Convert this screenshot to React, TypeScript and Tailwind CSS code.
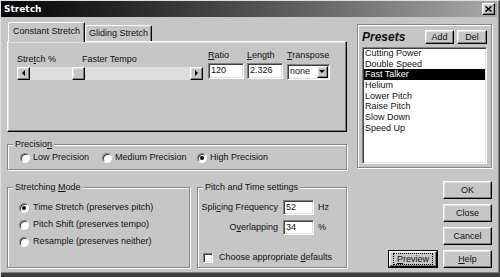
import React from 'react';

/*
    Classic Win9x "Stretch" dialog
*/
const raised = "border border-t-white border-l-white border-r-black border-b-black shadow-[inset_-1px_-1px_0_#808080,inset_1px_1px_0_#dfdfdf]";
const sunken = "border border-t-[#808080] border-l-[#808080] border-r-white border-b-white shadow-[inset_1px_1px_0_#404040,inset_-1px_-1px_0_#dfdfdf]";
const etched = "border border-[#868686] shadow-[inset_1px_1px_0_#fff,1px_1px_0_#fff]";

const presets = ["Cutting Power", "Double Speed", "Fast Talker", "Helium", "Lower Pitch", "Raise Pitch", "Slow Down", "Speed Up"];

function Radio({ checked }: { checked?: boolean }) {
    return (
        <span className="w-[10px] h-[10px] shrink-0 rounded-full bg-white border border-t-[#808080] border-l-[#808080] border-r-white border-b-white shadow-[inset_1px_1px_0_#404040] flex items-center justify-center">
            {checked && <span className="w-[4px] h-[4px] rounded-full bg-black" />}
        </span>
    );
}

function Group({ title, className, children }: { title: React.ReactNode; className: string; children?: React.ReactNode }) {
    return (
        <div className={`relative ${etched} ${className}`}>
            <span className="absolute -top-[6px] left-[5px] px-[2px] bg-[#c6c6c6] leading-[10px]">{title}</span>
            {children}
        </div>
    );
}

function Btn({ children, className }: { children: React.ReactNode; className: string }) {
    return (
        <div className={`${raised} ${className} flex items-center justify-center leading-none`}>
            {children}
        </div>
    );
}

function Arrow({ dir }: { dir: 'left' | 'right' | 'down' }) {
    const pts = dir === 'left' ? "3,0 3,6 0,3" : dir === 'right' ? "0,0 0,6 3,3" : "0,0 6,0 3,3";
    const w = dir === 'down' ? 7 : 4;
    const h = dir === 'down' ? 4 : 7;
    return (
        <svg width={w} height={h} viewBox={`0 0 ${w} ${h}`}>
            <polygon points={pts} fill="#000" />
        </svg>
    );
}

export default function App() {
    return (
        <div className="w-[500px] h-[277px] overflow-hidden bg-[#c6c6c6] text-[#111] text-[9px] font-['Liberation_Sans',Arial,sans-serif] flex flex-col border-t border-l border-r border-t-[#dfdfdf] border-l-[#dfdfdf] border-r-[#404040] shadow-[inset_-1px_0_0_#808080]">
            {/* title bar */}
            <div className="h-[16px] shrink-0 mr-[2px] bg-linear-to-r from-[#060606] to-[#a9a9a9] flex items-center justify-between pl-[3px] pr-[2px]">
                <span className="text-white font-bold text-[9px] font-['DejaVu_Sans',sans-serif] leading-none">Stretch</span>
                <div className={`${raised} w-[13px] h-[12px] bg-[#c6c6c6] flex items-center justify-center`}>
                    <svg width="7" height="6" viewBox="0 0 7 6">
                        <path d="M0.5 0.5 L6.5 5.5 M6.5 0.5 L0.5 5.5" stroke="#000" strokeWidth="1.6" />
                    </svg>
                </div>
            </div>

            <div className="flex pl-[6px] pt-[5px] h-[255px] shrink-0">
                {/* left column */}
                <div className="w-[340px] flex flex-col">
                    <div className="h-[19px] flex items-end pl-[1px]">
                        <div className="relative z-10 h-[20px] -mb-[1px] w-[77px] bg-[#c6c6c6] border-t border-l border-r border-t-white border-l-white border-r-black rounded-t-[2px] shadow-[inset_-1px_0_0_#808080] flex items-center justify-center pb-[2px]">
                            Constant Stretch
                        </div>
                        <div className="h-[16px] w-[67px] border-t border-l border-r border-t-white border-l-white border-r-black rounded-t-[2px] shadow-[inset_-1px_0_0_#808080] flex items-center justify-center">
                            Gliding Stretch
                        </div>
                    </div>
                    <div className={`${raised} h-[91px] flex pl-[9px] pt-[8px]`}>
                        <div className="w-[186px] flex flex-col mt-[4px]">
                            <div className="flex h-[10px] leading-[10px]">
                                <span className="w-[65px]">Stre<u>t</u>ch %</span>
                                <span>Faster Tempo</span>
                            </div>
                            <div className="mt-[3px] h-[13px] flex bg-[#dedede]">
                                <div className={`${raised} w-[13px] h-[13px] bg-[#c6c6c6] flex items-center justify-center`}><Arrow dir="left" /></div>
                                <div className="w-[42px]" />
                                <div className={`${raised} w-[13px] h-[13px] bg-[#c6c6c6]`} />
                                <div className="flex-1" />
                                <div className={`${raised} w-[13px] h-[13px] bg-[#c6c6c6] flex items-center justify-center`}><Arrow dir="right" /></div>
                            </div>
                        </div>
                        <div className="ml-[5px] w-[36px] flex flex-col">
                            <span className="h-[10px] leading-[10px]"><u>R</u>atio</span>
                            <div className={`${sunken} mt-[3px] h-[16px] bg-white pl-[2px] flex items-center`}>120</div>
                        </div>
                        <div className="ml-[3px] w-[36px] flex flex-col">
                            <span className="h-[10px] leading-[10px]"><u>L</u>ength</span>
                            <div className={`${sunken} mt-[3px] h-[16px] bg-white pl-[2px] flex items-center`}>2.326</div>
                        </div>
                        <div className="ml-[4px] w-[43px] flex flex-col">
                            <span className="h-[10px] leading-[10px]"><u>T</u>ranspose</span>
                            <div className={`${sunken} mt-[4px] h-[16px] bg-white pl-[2px] flex items-center justify-between pr-[1px]`}>
                                <span>none</span>
                                <div className={`${raised} w-[11px] h-[12px] bg-[#c6c6c6] flex items-center justify-center`}><Arrow dir="down" /></div>
                            </div>
                        </div>
                    </div>

                    <Group title={<>Precisio<u>n</u></>} className="mt-[12px] h-[26px] flex items-center pl-[12px] pt-[2px]">
                        <div className="w-[82px] flex items-center gap-[3px]"><Radio /><span>Low Precision</span></div>
                        <div className="w-[95px] flex items-center gap-[3px]"><Radio /><span>Medium Precision</span></div>
                        <div className="flex items-center gap-[3px]"><Radio checked /><span>High Precision</span></div>
                    </Group>

                    <div className="mt-[17px] h-[81px] flex gap-[7px]">
                        <Group title={<>Stretching <u>M</u>ode</>} className="w-[183px] pl-[11px] pt-[11px] flex flex-col">
                            <div className="h-[17px] flex items-center gap-[4px]"><Radio checked /><span>Time Stretch (preserves pitch)</span></div>
                            <div className="h-[17px] flex items-center gap-[4px]"><Radio /><span>Pitch Shift (preserves tempo)</span></div>
                            <div className="h-[17px] flex items-center gap-[4px]"><Radio /><span>Resample (preserves neither)</span></div>
                        </Group>
                        <Group title="Pitch and Time settings" className="w-[150px] pt-[12px] flex flex-col">
                            <div className="h-[15px] flex items-center">
                                <span className="w-[80px] text-right">Spli<u>c</u>ing Frequency</span>
                                <div className={`${sunken} ml-[5px] w-[31px] h-[15px] bg-white pl-[2px] flex items-center`}>52</div>
                                <span className="ml-[4px]">Hz</span>
                            </div>
                            <div className="mt-[5px] h-[15px] flex items-center">
                                <span className="w-[80px] text-right">O<u>v</u>erlapping</span>
                                <div className={`${sunken} ml-[5px] w-[31px] h-[15px] bg-white pl-[2px] flex items-center`}>34</div>
                                <span className="ml-[4px]">%</span>
                            </div>
                            <div className="mt-[16px] pl-[5px] flex items-center gap-[6px]">
                                <span className={`${sunken} w-[10px] h-[10px] bg-white`} />
                                <span>Choose appropriate <u>d</u>efaults</span>
                            </div>
                        </Group>
                    </div>
                </div>

                {/* right column */}
                <div className="ml-[10px] w-[135px] flex flex-col">
                    <div className={`${etched} mt-[2px] h-[144px] flex flex-col px-[4px] pt-[5px]`}>
                        <div className="h-[14px] flex items-center justify-between">
                            <span className="text-[12px] font-bold italic leading-none">Presets</span>
                            <div className="flex gap-[3px]">
                                <Btn className="w-[29px] h-[14px]">Add</Btn>
                                <Btn className="w-[30px] h-[14px]">Del</Btn>
                            </div>
                        </div>
                        <div className={`${sunken} mt-[3px] h-[117px] bg-white px-[1px] flex flex-col`}>
                            {presets.map((p) => (
                                <div key={p} className={`h-[10.7px] leading-[10.7px] pl-[1px] ${p === "Fast Talker" ? "bg-black text-white" : ""}`}>{p}</div>
                            ))}
                        </div>
                    </div>
                    <div className="mt-[13px] flex flex-col items-end gap-[5px]">
                        <Btn className="w-[49px] h-[18px]">OK</Btn>
                        <Btn className="w-[49px] h-[18px]">Close</Btn>
                        <Btn className="w-[49px] h-[18px]">Cancel</Btn>
                        <div className="flex gap-[5px]">
                            <div className="w-[50px] h-[18px] border border-black">
                                <div className={`${raised} w-full h-full flex items-center justify-center`}>
                                    <span className="outline outline-1 outline-dotted outline-black px-[3px] leading-[10px]"><u>P</u>review</span>
                                </div>
                            </div>
                            <Btn className="w-[49px] h-[18px]"><span><u>H</u>elp</span></Btn>
                        </div>
                    </div>
                </div>
            </div>
            <div className="flex-1 border-t border-t-[#808080] bg-[#3c3c3c]" />
        </div>
    );
}
